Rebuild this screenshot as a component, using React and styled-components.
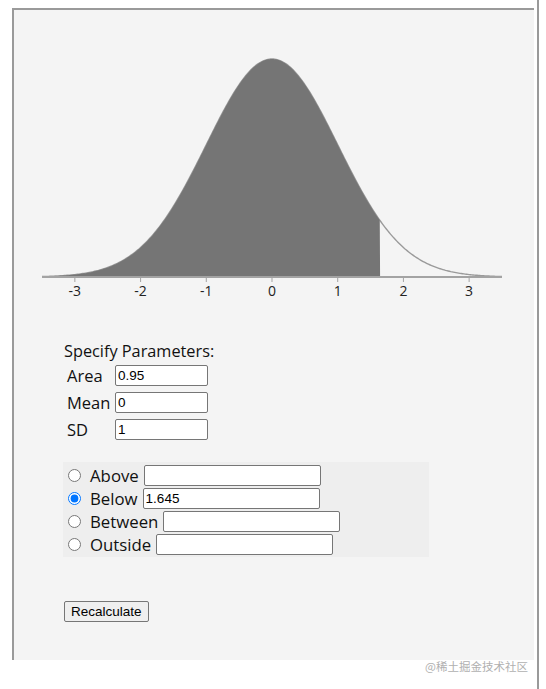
import React, { useState } from 'react'
import styled, { createGlobalStyle } from 'styled-components'

const GlobalStyle = createGlobalStyle`
  html, body {
    margin: 0;
    background: #ffffff;
  }
  body {
    font-family: "Open Sans", "Noto Sans", sans-serif;
    color: #111;
  }
`

// chart geometry (svg coords, origin = panel content corner)
const CX = 258
const UNIT = 65.71
const BASE = 267
const YSCALE = 546.5
const pdf = (x) => Math.exp(-x * x / 2) / Math.sqrt(2 * Math.PI)
const px = (x) => CX + x * UNIT
const py = (x) => BASE - pdf(x) * YSCALE

const curvePath = (from, to) => {
  let d = ''
  for (let x = from; x <= to + 1e-9; x += 0.02) {
    d += (d ? ' L' : 'M') + px(x).toFixed(2) + ' ' + py(x).toFixed(2)
  }
  return d
}

const shadedPath = (from, to) =>
  curvePath(from, to) + ` L${px(to).toFixed(2)} ${BASE} L${px(from).toFixed(2)} ${BASE} Z`

function Chart({ below }) {
  const ticks = [-3, -2, -1, 0, 1, 2, 3]
  return (
    <ChartSvg width="520" height="300" viewBox="0 0 520 300">
      <path d={curvePath(-3.5, 3.5)} fill="none" stroke="#9a9a9a" strokeWidth="1.4" />
      <path d={shadedPath(-3.5, below)} fill="#757575" />
      <line x1="28" x2="488" y1={BASE} y2={BASE} stroke="#a3a3a3" strokeWidth="2" />
      {ticks.map((t) => (
        <g key={t}>
          <line x1={px(t)} x2={px(t)} y1={BASE} y2={BASE + 5} stroke="#a3a3a3" strokeWidth="1" />
          <TickLabel x={px(t)} y={BASE + 19} textAnchor="middle">{t}</TickLabel>
        </g>
      ))}
    </ChartSvg>
  )
}

export default function App() {
  const [mode, setMode] = useState('below')
  const [area, setArea] = useState('0.95')
  const [mean, setMean] = useState('0')
  const [sd, setSd] = useState('1')
  const [values, setValues] = useState({ above: '', below: '1.645', between: '', outside: '' })

  const options = [
    { key: 'above', label: 'Above' },
    { key: 'below', label: 'Below' },
    { key: 'between', label: 'Between' },
    { key: 'outside', label: 'Outside' },
  ]

  return (
    <>
      <GlobalStyle />
      <Page>
        <Main>
          <Panel>
            <Chart below={1.645} />
            <Form>
              <Heading>Specify Parameters:</Heading>
              <ParamGrid>
                <ParamLabel>Area</ParamLabel>
                <TextInput width={93} value={area} onChange={(e) => setArea(e.target.value)} />
                <ParamLabel>Mean</ParamLabel>
                <TextInput width={93} value={mean} onChange={(e) => setMean(e.target.value)} />
                <ParamLabel>SD</ParamLabel>
                <TextInput width={93} value={sd} onChange={(e) => setSd(e.target.value)} />
              </ParamGrid>
              <RadioBox>
                {options.map((o) => (
                  <RadioRow key={o.key}>
                    <Radio
                      type="radio"
                      name="shade"
                      checked={mode === o.key}
                      onChange={() => setMode(o.key)}
                    />
                    <RadioLabel>{o.label}</RadioLabel>
                    <TextInput
                      width={177}
                      value={values[o.key]}
                      onChange={(e) => setValues({ ...values, [o.key]: e.target.value })}
                    />
                  </RadioRow>
                ))}
              </RadioBox>
              <Button>Recalculate</Button>
            </Form>
          </Panel>
          <Watermark>@稀土掘金技术社区</Watermark>
        </Main>
        <Rule />
      </Page>
    </>
  )
}

const Page = styled.div`
  display: flex;
  height: 689px;
  overflow: hidden;
`

const Main = styled.div`
  width: 537px;
  padding: 8px 0 0 12px;
  box-sizing: border-box;
`

const Panel = styled.div`
  width: 522px;
  height: 652px;
  box-sizing: border-box;
  border-top: 2px solid #9a9a9a;
  border-left: 2px solid #9a9a9a;
  background: #f4f4f4;
`

const Rule = styled.div`
  width: 2px;
  height: 100%;
  background: #9a9a9a;
`

const ChartSvg = styled.svg`
  display: block;
`

const TickLabel = styled.text`
  font-family: "Open Sans", "Noto Sans", sans-serif;
  font-size: 14px;
  fill: #222;
`

const Form = styled.div`
  margin-top: 31px;
  padding-left: 50px;
`

const Heading = styled.div`
  font-size: 16.3px;
  line-height: 20px;
  height: 21px;
`

const ParamGrid = styled.div`
  display: grid;
  grid-template-columns: 48px auto;
  grid-auto-rows: 27px;
  align-items: center;
  justify-items: start;
  margin-left: 3px;
`

const ParamLabel = styled.span`
  font-size: 16.5px;
  line-height: 20px;
`

const TextInput = styled.input.attrs({ type: 'text' })`
  width: ${(p) => p.width}px;
  height: 21px;
  box-sizing: border-box;
  padding: 1px 2px;
  border: 1px solid #767676;
  border-radius: 2px;
  background: #fff;
  font-family: "Liberation Sans", Arial, sans-serif;
  font-size: 13.5px;
  color: #000;
  margin: 0;
`

const RadioBox = styled.div`
  width: 366px;
  margin: 19px 0 0 -1px;
  padding: 2px 0 1px;
  background: #eeeeee;
`

const RadioRow = styled.div`
  display: flex;
  align-items: center;
  height: 23px;
`

const Radio = styled.input`
  width: 13px;
  height: 13px;
  margin: 0 3px 0 5px;
`

const RadioLabel = styled.span`
  font-size: 16.8px;
  line-height: 20px;
  margin: 0 5px 0 6px;
`

const Button = styled.button`
  display: block;
  margin-top: 44px;
  height: 21px;
  padding: 1px 6px;
  font-family: "Liberation Sans", Arial, sans-serif;
  font-size: 13.5px;
  color: #000;
  background: #efefef;
  border: 1px solid #767676;
  border-radius: 2px;
`

const Watermark = styled.div`
  text-align: right;
  padding-right: 9px;
  font-family: "Noto Sans CJK SC", sans-serif;
  font-size: 11.5px;
  line-height: 12px;
  color: #b0b0b0;
`
